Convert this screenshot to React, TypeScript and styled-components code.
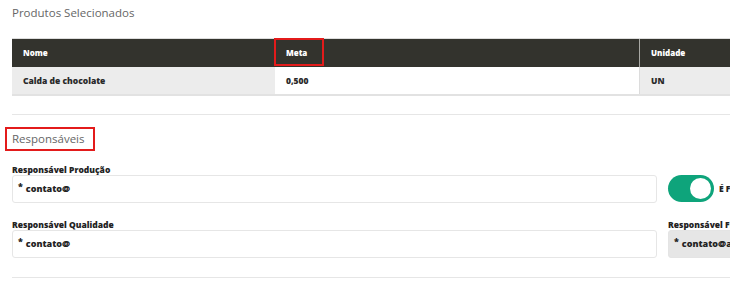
import styled, { createGlobalStyle } from 'styled-components'

const GlobalStyle = createGlobalStyle`
body{
    margin: 0;
    overflow: hidden;
    background: #fff;
    font-family: "Open Sans", "Liberation Sans", sans-serif;
}
`
const Page = styled.div`
width: 1000px;
padding: 0 0 0 12px;
font-size: 11.5px;
line-height: 16px;
`
const TitleRow = styled.div<{ top: number }>`
padding-top: ${props => props.top}px;
display: flex;
`
const SectionTitle = styled.div<{ marked?: boolean }>`
font-size: 11.5px;
color: #666;
line-height: 16px;
${props => props.marked ? `
    border: 2px solid #e31b1b;
    margin-left: -7px;
    padding: 2px 8px 2px 5px;
` : ''}
`
const Table = styled.div`
margin-top: 17px;
display: grid;
grid-template-columns: 263px 364px 1fr;
border-top: 1px solid #ddd;
border-bottom: 2px solid #e2e2e2;
`
const Th = styled.div<{ sep?: boolean }>`
background: #33332d;
color: #fff;
font-size: 8px;
font-weight: 800;
height: 28px;
display: flex;
align-items: center;
padding-left: 11px;
border-left: ${props => props.sep ? '1px solid #a9a9a4' : '0'};
position: relative;
`
const Td = styled.div<{ white?: boolean; sep?: boolean }>`
background: ${props => props.white ? '#fff' : '#ececec'};
color: #2a2a2a;
font-size: 8.5px;
font-weight: 800;
height: 27px;
display: flex;
align-items: center;
padding-left: 11px;
border-left: ${props => props.sep ? '1px solid #dcdcdc' : '0'};
`
const Marker = styled.span`
position: absolute;
left: -1px;
top: -1px;
width: 50px;
height: 28px;
border: 2px solid #e31b1b;
box-sizing: border-box;
`
const Rule = styled.div<{ top: number }>`
width: 988px;
height: 1px;
background: #e6e6e6;
margin-top: ${props => props.top}px;
`
const FormGrid = styled.div`
display: grid;
grid-template-columns: 645px 1fr;
column-gap: 11px;
row-gap: 17px;
margin-top: 14px;
`
const Field = styled.div`
display: flex;
flex-direction: column;
`
const Label = styled.div`
font-size: 8.5px;
font-weight: 800;
color: #222;
line-height: 10px;
height: 10px;
white-space: nowrap;
`
const Input = styled.div<{ disabled?: boolean }>`
height: 28px;
box-sizing: border-box;
border: 1px solid ${props => props.disabled ? '#e4e4e4' : '#e6e6e6'};
background: ${props => props.disabled ? '#e6e6e6' : '#fff'};
border-radius: 3px;
display: flex;
align-items: center;
padding-left: 5px;
font-size: 9px;
font-weight: 800;
color: #222;
white-space: nowrap;
sup{
    font-size: 9px;
    margin-right: 3px;
    position: relative;
    top: -2px;
}
`
const ToggleWrap = styled.div`
display: flex;
align-items: center;
align-self: start;
gap: 5px;
margin-top: 10px;
font-size: 8.5px;
font-weight: 800;
color: #222;
white-space: nowrap;
`
const Toggle = styled.div<{ on?: boolean }>`
width: 46px;
height: 27px;
border-radius: 14px;
background: ${props => props.on ? '#0ea47b' : '#ccc'};
display: flex;
align-items: center;
justify-content: ${props => props.on ? 'flex-end' : 'flex-start'};
padding: 0 3px;
box-sizing: border-box;
&::after{
    content: '';
    width: 21px;
    height: 21px;
    border-radius: 50%;
    background: #fff;
}
`

export default function App() {
    return (
        <Page>
            <GlobalStyle />
            <TitleRow top={5}>
                <SectionTitle>Produtos Selecionados</SectionTitle>
            </TitleRow>
            <Table>
                <Th>Nome</Th>
                <Th>Meta<Marker /></Th>
                <Th sep>Unidade</Th>
                <Td>Calda de chocolate</Td>
                <Td white>0,500</Td>
                <Td sep>UN</Td>
            </Table>
            <Rule top={18} />
            <TitleRow top={12}>
                <SectionTitle marked>Responsáveis</SectionTitle>
            </TitleRow>
            <FormGrid>
                <Field>
                    <Label>Responsável Produção</Label>
                    <Input><sup>*</sup>contato@</Input>
                </Field>
                <ToggleWrap>
                    <Toggle on />
                    É Fiscal
                </ToggleWrap>
                <Field>
                    <Label>Responsável Qualidade</Label>
                    <Input><sup>*</sup>contato@</Input>
                </Field>
                <Field>
                    <Label>Responsável Fiscal</Label>
                    <Input disabled><sup>*</sup>contato@app.com.br</Input>
                </Field>
            </FormGrid>
            <Rule top={19} />
        </Page>
    )
}
